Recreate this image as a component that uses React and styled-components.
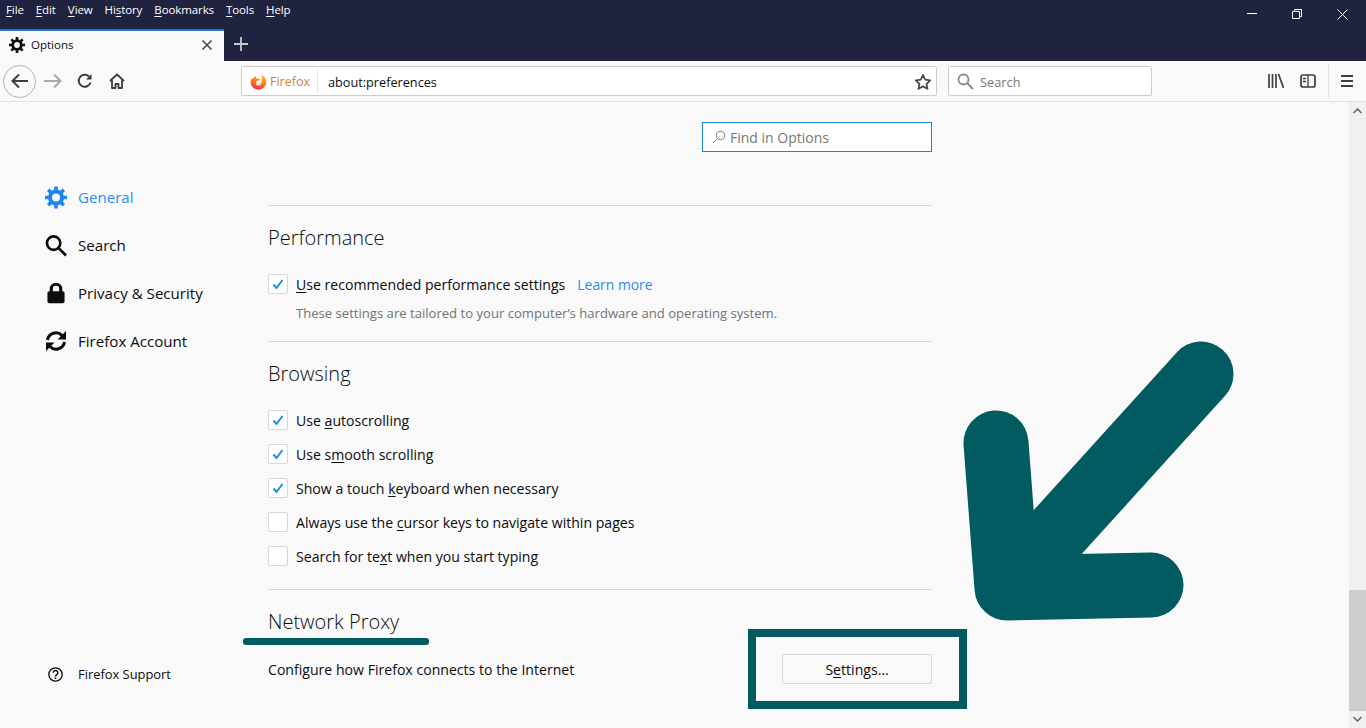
import React from 'react';
import styled, { createGlobalStyle } from 'styled-components';

const GlobalStyle = createGlobalStyle`
  html, body {
    margin: 0;
    height: 100%;
    overflow: hidden;
  }
  body {
    background: #f9f9fa;
    font-family: "Open Sans", "Noto Sans", "Liberation Sans", sans-serif;
    color: #0c0c0d;
  }
  u {
    text-underline-offset: 2px;
  }
`;

const Window = styled.div`
  display: flex;
  flex-direction: column;
  width: 1366px;
  height: 728px;
  overflow: hidden;
`;

const TitleArea = styled.header`
  background: #202340;
  height: 61px;
  flex: none;
  display: flex;
  flex-direction: column;
`;

const MenuRow = styled.div`
  height: 29px;
  display: flex;
  justify-content: space-between;
`;

const Menu = styled.nav`
  display: flex;
  gap: 12px;
  padding: 2px 0 0 6px;
`;

const MenuItem = styled.span`
  color: #fff;
  font-size: 11.5px;
  letter-spacing: -0.1px;
  line-height: 15px;
`;

const WindowControls = styled.div`
  display: flex;
  align-items: center;
  height: 28px;
  gap: 35px;
  padding-right: 18px;
`;

const TabRow = styled.div`
  display: flex;
  align-items: stretch;
  height: 32px;
`;

const Tab = styled.div`
  width: 224px;
  box-sizing: border-box;
  background: #f9f9fa;
  border-top: 2px solid #2b74c4;
  display: flex;
  align-items: center;
  padding: 0 11px 3px 9px;
  gap: 6px;
`;

const TabLabel = styled.span`
  flex: 1;
  font-size: 11.5px;
`;

const NewTab = styled.div`
  display: flex;
  align-items: center;
  padding: 0 0 2px 9px;
`;

const Toolbar = styled.div`
  flex: none;
  height: 41px;
  box-sizing: border-box;
  background: #f9f9fa;
  border-bottom: 1px solid #e1e1e3;
  display: flex;
  align-items: center;
  padding-left: 3px;
`;

const BackButton = styled.div`
  width: 33px;
  height: 33px;
  box-sizing: border-box;
  border: 1px solid #b1b1b3;
  border-radius: 50%;
  display: flex;
  align-items: center;
  justify-content: center;
  margin-right: 1px;
`;

const NavButton = styled.div`
  width: 32px;
  display: flex;
  justify-content: center;
`;

const UrlBar = styled.div`
  width: 696px;
  height: 30px;
  box-sizing: border-box;
  margin-left: 108px;
  background: #fff;
  border: 1px solid #ccc;
  border-radius: 2px;
  display: flex;
  align-items: center;
  padding: 2px 4px 0 8px;
`;

const Identity = styled.span`
  color: #d9803c;
  font-size: 12.5px;
  margin-left: 3px;
  padding-right: 7px;
  border-right: 1px solid #e3e3e5;
  line-height: 24px;
`;

const UrlText = styled.span`
  flex: 1;
  font-size: 12.7px;
  margin-left: 10px;
`;

const SearchBar = styled.div`
  width: 204px;
  height: 30px;
  box-sizing: border-box;
  margin-left: 11px;
  background: #fff;
  border: 1px solid #ccc;
  border-radius: 2px;
  display: flex;
  align-items: center;
  padding-left: 8px;
  gap: 6px;
`;

const SearchHint = styled.span`
  color: #777;
  font-size: 12.8px;
  padding-top: 2px;
`;

const ToolIcons = styled.div`
  display: flex;
  align-items: center;
  margin-left: auto;
  gap: 16px;
  padding-right: 12px;
`;

const ToolDivider = styled.span`
  width: 1px;
  height: 34px;
  background: #e3e3e5;
  margin: 0 -5px 0 -4px;
`;

const Body = styled.div`
  position: relative;
  flex: 1;
  display: flex;
  min-height: 0;
`;

const Sidebar = styled.aside`
  width: 268px;
  flex: none;
  display: flex;
  flex-direction: column;
  box-sizing: border-box;
  padding: 71px 0 45px 45px;
`;

const NavItem = styled.div`
  height: 48px;
  display: flex;
  align-items: center;
  gap: 11px;
  font-size: 15.1px;
  color: ${(p) => (p.$active ? '#2b8cf0' : '#0c0c0d')};
`;

const IconSlot = styled.span`
  width: 22px;
  display: flex;
  justify-content: center;
`;

const SupportLink = styled.div`
  margin-top: auto;
  display: flex;
  align-items: center;
  gap: 15px;
  padding-left: 3px;
  font-size: 12.9px;
  line-height: 18px;
`;

const Main = styled.main`
  width: 664px;
  flex: none;
  padding-top: 20px;
`;

const FindRow = styled.div`
  display: flex;
  justify-content: flex-end;
  margin-bottom: 53px;
`;

const FindBox = styled.div`
  width: 230px;
  height: 30px;
  box-sizing: border-box;
  border: 1px solid #1a85d0;
  background: #fff;
  display: flex;
  align-items: center;
  padding-left: 9px;
  gap: 4px;
  color: #777;
  font-size: 14px;
`;

const Divider = styled.hr`
  border: 0;
  height: 1px;
  background: #d7d7db;
  margin: ${(p) => p.$top || 0}px 0 0;
`;

const SectionTitle = styled.h2`
  font-size: 20px;
  font-weight: 300;
  line-height: 32px;
  margin: ${(p) => p.$top}px 0 ${(p) => p.$bottom}px;
`;

const CheckRow = styled.label`
  height: 34px;
  display: flex;
  align-items: center;
  gap: 8px;
  font-size: 14.1px;
`;

const CheckBox = styled.span`
  width: 20px;
  height: 20px;
  box-sizing: border-box;
  background: #fff;
  border: 1px solid #d7d7db;
  border-radius: 2px;
  display: flex;
  align-items: center;
  justify-content: center;
`;

const LearnMore = styled.a`
  color: #2b8cf0;
  margin-left: 4px;
  font-size: 13.9px;
`;

const Description = styled.p`
  margin: 2px 0 0 28px;
  font-size: 13.1px;
  line-height: 20px;
  color: #737373;
`;

const ProxyRow = styled.div`
  display: flex;
  align-items: center;
  justify-content: space-between;
  font-size: 14.1px;
`;

const SettingsButton = styled.button`
  width: 150px;
  height: 30px;
  background: #f9f9fa;
  border: 1px solid #d7d7db;
  border-radius: 2px;
  font: inherit;
  color: #0c0c0d;
  padding: 0;
`;

const Scrollbar = styled.div`
  width: 17px;
  margin-left: auto;
  background: #f0f0f0;
  display: flex;
  flex-direction: column;
  align-items: center;
  justify-content: space-between;
  padding: 6px 0;
  box-sizing: border-box;
`;

const ScrollThumb = styled.div`
  width: 100%;
  height: 121px;
  background: #cdcdcd;
  margin-top: auto;
  margin-bottom: 5px;
`;

/* hand-drawn annotations lying over the page */
const TitleUnderline = styled.div`
  position: absolute;
  left: 243px;
  top: 536px;
  width: 186px;
  height: 7px;
  background: #025b60;
  border-radius: 3px;
`;

const HighlightBox = styled.div`
  position: absolute;
  left: 748px;
  top: 527px;
  width: 219px;
  height: 80px;
  box-sizing: border-box;
  border: 8px solid #025b60;
  pointer-events: none;
`;

const ArrowMark = styled.svg`
  position: absolute;
  left: 960px;
  top: 238px;
`;

const GearIcon = ({ size = 16, color = '#0c0c0d' }) => (
  <svg width={size} height={size} viewBox="1 1 22 22" fill="none">
    <circle cx="12" cy="12" r="6" stroke={color} strokeWidth="4" />
    <path
      d="M12 1v4M12 19v4M1 12h4M19 12h4M4.200 4.200l2.800 2.800M17 17l2.800 2.800M4.200 19.800L7 17M17 7l2.800-2.800"
      stroke={color}
      strokeWidth="3.600"
    />
  </svg>
);

const Check = () => (
  <svg width="14" height="14" viewBox="0 0 14 14" fill="none">
    <path d="M2.500 7.500L5.500 11 11.500 3" stroke="#1b8fd0" strokeWidth="2" />
  </svg>
);

const FirefoxLogo = () => (
  <svg width="17" height="17" viewBox="0 0 17 17">
    <defs>
      <linearGradient id="fx" x1="0.7" y1="0" x2="0.3" y2="1">
        <stop offset="0" stopColor="#ffc02e" />
        <stop offset="0.5" stopColor="#ff7a1a" />
        <stop offset="1" stopColor="#e8245c" />
      </linearGradient>
    </defs>
    <path d="M11.500 1c3.200 1.400 5 4 5 7.300A8 8 0 0 1 .6 8.700c0-2 .6-3.700 1.400-4.800l.5 1.600C3.300 3.700 4.600 2.600 6.300 2.300 5.900 3.300 6 4 6.500 4.500c2-.2 3.400.5 4 1.500-1.600.2-2.500.8-3 1.500.6 1.500 3 2 4.500.5 0-2.300-.3-5-.5-7z" fill="url(#fx)" />
    <circle cx="8.400" cy="9" r="2.600" fill="#fff" opacity="0.75" />
  </svg>
);

const App = () => (
  <Window>
    <GlobalStyle />
    <TitleArea>
      <MenuRow>
        <Menu>
          <MenuItem><u>F</u>ile</MenuItem>
          <MenuItem><u>E</u>dit</MenuItem>
          <MenuItem><u>V</u>iew</MenuItem>
          <MenuItem>Hi<u>s</u>tory</MenuItem>
          <MenuItem><u>B</u>ookmarks</MenuItem>
          <MenuItem><u>T</u>ools</MenuItem>
          <MenuItem><u>H</u>elp</MenuItem>
        </Menu>
        <WindowControls>
          <svg width="10" height="10" viewBox="0 0 10 10" stroke="#fff" fill="none">
            <path d="M0 4.500h10" />
          </svg>
          <svg width="10" height="10" viewBox="0 0 10 10" stroke="#fff" fill="none">
            <path d="M.5 2.500h7v7h-7zM2.500 2.500v-2h7v7h-2" />
          </svg>
          <svg width="11" height="11" viewBox="0 0 11 11" stroke="#fff" fill="none">
            <path d="M.5.500l10 10M10.500.500l-10 10" />
          </svg>
        </WindowControls>
      </MenuRow>
      <TabRow>
        <Tab>
          <GearIcon size={16} />
          <TabLabel>Options</TabLabel>
          <svg width="12" height="12" viewBox="0 0 12 12" stroke="#4a4a4f" strokeWidth="1.600" fill="none">
            <path d="M1.500 1.500l9 9M10.500 1.500l-9 9" />
          </svg>
        </Tab>
        <NewTab>
          <svg width="16" height="16" viewBox="0 0 16 16" stroke="#c9c9d0" strokeWidth="1.800" fill="none">
            <path d="M8 1v14M1 8h14" />
          </svg>
        </NewTab>
      </TabRow>
    </TitleArea>

    <Toolbar>
      <BackButton>
        <svg width="18" height="16" viewBox="0 0 18 16" stroke="#3d3d42" strokeWidth="2" fill="none">
          <path d="M1.500 8H17M8 1.500L1.500 8 8 14.500" />
        </svg>
      </BackButton>
      <NavButton>
        <svg width="18" height="16" viewBox="0 0 18 16" stroke="#a9a9ac" strokeWidth="2" fill="none">
          <path d="M0 8h16M10 1.500L16.500 8 10 14.500" />
        </svg>
      </NavButton>
      <NavButton>
        <svg width="16" height="16" viewBox="0 0 16 16" stroke="#3d3d42" strokeWidth="2" fill="none">
          <path d="M13.500 9.500A6 6 0 1 1 12 3.500" />
          <path d="M14.500 1v5.500H9z" fill="#3d3d42" stroke="none" />
        </svg>
      </NavButton>
      <NavButton>
        <svg width="16" height="16" viewBox="0 0 16 16" stroke="#3d3d42" strokeWidth="1.800" fill="none" strokeLinejoin="round">
          <path d="M1 8l7-6.500L15 8M3 7v8h3.500v-4h3v4H13V7" />
        </svg>
      </NavButton>
      <UrlBar>
        <FirefoxLogo />
        <Identity>Firefox</Identity>
        <UrlText>about:preferences</UrlText>
        <svg width="18" height="18" viewBox="0 0 18 18" stroke="#4a4a4f" strokeWidth="1.800" fill="none" strokeLinejoin="round">
          <path d="M9 2l2.200 4.600 5 .7-3.600 3.500.9 5L9 13.400l-4.500 2.400.9-5L1.800 7.300l5-.7z" />
        </svg>
      </UrlBar>
      <SearchBar>
        <svg width="17" height="17" viewBox="0 0 17 17" stroke="#8a8a8f" strokeWidth="1.800" fill="none">
          <circle cx="6.500" cy="6.500" r="5" />
          <path d="M10 10l6 6" />
        </svg>
        <SearchHint>Search</SearchHint>
      </SearchBar>
      <ToolIcons>
        <svg width="16" height="16" viewBox="0 0 16 16" stroke="#3d3d42" strokeWidth="1.700" fill="none">
          <path d="M1 1v14M4.500 1v14M8 1v14M10.500 1l5 14" />
        </svg>
        <svg width="16" height="14" viewBox="0 0 16 14" stroke="#3d3d42" strokeWidth="1.700" fill="none">
          <rect x="1" y="1" width="14" height="12" rx="2" />
          <path d="M8 1v12M3 4.500h3M3 7.500h3" strokeWidth="1.300" />
        </svg>
        <ToolDivider />
        <svg width="14" height="12" viewBox="0 0 14 12" stroke="#3d3d42" strokeWidth="2" fill="none">
          <path d="M1 1h12M1 6h12M1 11h12" />
        </svg>
      </ToolIcons>
    </Toolbar>

    <Body>
      <Sidebar>
        <NavItem $active>
          <IconSlot><GearIcon size={23} color="#1a86f0" /></IconSlot>
          General
        </NavItem>
        <NavItem>
          <IconSlot>
            <svg width="23" height="23" viewBox="0 0 23 23" stroke="#0c0c0d" strokeWidth="2.800" fill="none">
              <circle cx="9" cy="9" r="7" />
              <path d="M14 14l8 8" />
            </svg>
          </IconSlot>
          Search
        </NavItem>
        <NavItem>
          <IconSlot>
            <svg width="18" height="22" viewBox="0 0 20 23" fill="#0c0c0d">
              <path d="M3 9.500V7a7 7 0 0 1 14 0v2.500h.5a2 2 0 0 1 2 2V21a2 2 0 0 1-2 2h-15a2 2 0 0 1-2-2v-9.500a2 2 0 0 1 2-2zm3.500 0h7V7a3.500 3.500 0 0 0-7 0z" />
            </svg>
          </IconSlot>
          Privacy &amp; Security
        </NavItem>
        <NavItem>
          <IconSlot>
            <svg width="22" height="22" viewBox="0 0 22 22" fill="none" stroke="#0c0c0d" strokeWidth="3">
              <path d="M2.500 10A8.500 8.500 0 0 1 17 5.500L19 8" />
              <path d="M19.500 12A8.500 8.500 0 0 1 5 16.500L3 14" />
              <path d="M21 1v8.500h-8.500zM1 21v-8.500h8.500z" fill="#0c0c0d" stroke="none" />
            </svg>
          </IconSlot>
          Firefox Account
        </NavItem>
        <SupportLink>
          <svg width="15" height="15" viewBox="0 0 15 15" fill="none" stroke="#0c0c0d">
            <circle cx="7.500" cy="7.500" r="6.700" strokeWidth="1.300" />
            <path d="M5.200 5.800a2.300 2.300 0 1 1 3.400 2c-.8.500-1.100.8-1.100 1.600" strokeWidth="1.500" />
            <path d="M7.500 10.500v1.500" strokeWidth="1.600" />
          </svg>
          Firefox Support
        </SupportLink>
      </Sidebar>

      <Main>
        <FindRow>
          <FindBox>
            <svg width="14" height="14" viewBox="0 0 14 14" stroke="#777" fill="none">
              <circle cx="8.500" cy="5.500" r="4.200" />
              <path d="M5.500 8.500L1 13" />
            </svg>
            Find in Options
          </FindBox>
        </FindRow>
        <Divider />
        <SectionTitle $top={16} $bottom={13}>Performance</SectionTitle>
        <CheckRow>
          <CheckBox><Check /></CheckBox>
          <span><u>U</u>se recommended performance settings</span>
          <LearnMore>Learn more</LearnMore>
        </CheckRow>
        <Description>These settings are tailored to your computer’s hardware and operating system.</Description>
        <Divider $top={18} />
        <SectionTitle $top={16} $bottom={13}>Browsing</SectionTitle>
        <CheckRow>
          <CheckBox><Check /></CheckBox>
          <span>Use <u>a</u>utoscrolling</span>
        </CheckRow>
        <CheckRow>
          <CheckBox><Check /></CheckBox>
          <span>Use s<u>m</u>ooth scrolling</span>
        </CheckRow>
        <CheckRow>
          <CheckBox><Check /></CheckBox>
          <span>Show a touch <u>k</u>eyboard when necessary</span>
        </CheckRow>
        <CheckRow>
          <CheckBox />
          <span>Always use the <u>c</u>ursor keys to navigate within pages</span>
        </CheckRow>
        <CheckRow>
          <CheckBox />
          <span>Search for te<u>x</u>t when you start typing</span>
        </CheckRow>
        <Divider $top={16} />
        <SectionTitle $top={16} $bottom={16}>Network Proxy</SectionTitle>
        <ProxyRow>
          <span>Configure how Firefox connects to the Internet</span>
          <SettingsButton>S<u>e</u>ttings…</SettingsButton>
        </ProxyRow>
      </Main>

      <Scrollbar>
        <svg width="9" height="6" viewBox="0 0 9 6" stroke="#606060" strokeWidth="1.500" fill="none">
          <path d="M.5 5l4-4 4 4" />
        </svg>
        <ScrollThumb />
        <svg width="9" height="6" viewBox="0 0 9 6" stroke="#606060" strokeWidth="1.500" fill="none">
          <path d="M.5 1l4 4 4-4" />
        </svg>
      </Scrollbar>

      <TitleUnderline />
      <HighlightBox />
      <ArrowMark width="280" height="290" viewBox="960 340 280 290" fill="none" stroke="#025b60" strokeWidth="65" strokeLinecap="round" strokeLinejoin="round">
        <path d="M996 443L1007 588 1151 585M1007 588L1201 374" />
      </ArrowMark>
    </Body>
  </Window>
);

export default App;
